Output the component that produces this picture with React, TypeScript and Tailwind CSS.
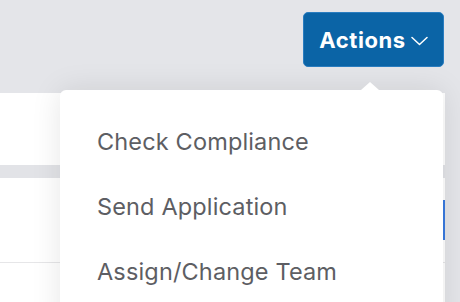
import React from "react";

export default function App() {
  const items = ["Check Compliance", "Send Application", "Assign/Change Team"];
  return (
    <div
      className="relative w-[460px] h-[302px] overflow-hidden bg-[#e4e5e9]"
      style={{ fontFamily: "Inter, 'Liberation Sans', Arial, sans-serif" }}
    >
      <div className="flex justify-end pt-[12px] pr-[16px] h-[93px]">
        <button className="flex items-center gap-[5px] h-[55px] w-[141px] justify-center rounded-[5px] bg-[#0b64a6] border border-[#2a7dc0] text-white font-bold text-[22px] tracking-[0.6px]">
          <span className="mt-[1px]">Actions</span>
          <svg width="17" height="10" viewBox="0 0 17 10" fill="none" className="mt-[2px]">
            <path d="M1 1.5l7.5 7 7.5-7" stroke="white" strokeWidth="1.5" strokeLinecap="round" strokeLinejoin="round" />
          </svg>
        </button>
      </div>
      <div className="w-[445px] bg-white flex flex-col">
        <div className="h-[72px]" />
        <div className="h-[13px] bg-[#e2e3e7]" />
        <div className="h-[85px] border-b border-[#e6e6e8] relative">
          <div className="absolute right-0 top-[22px] w-[2px] h-[40px] bg-[#3a7be0]" />
        </div>
        <div className="h-[60px]" />
      </div>
      <div className="absolute left-[60px] top-[90px] w-[383px] h-[240px] bg-white rounded-[6px] shadow-[0_0_30px_rgba(0,0,0,0.1)]">
        <div
          className="absolute top-[-8px] left-[301px] w-0 h-0"
          style={{ borderLeft: "9px solid transparent", borderRight: "9px solid transparent", borderBottom: "8px solid white" }}
        />
        <div className="pt-[19px] flex flex-col">
          {items.map((t) => (
            <div key={t} className="h-[65px] flex items-center pl-[37px] text-[23.5px] text-[#5d5e63] tracking-[0.15px]">
              {t}
            </div>
          ))}
        </div>
      </div>
    </div>
  );
}
